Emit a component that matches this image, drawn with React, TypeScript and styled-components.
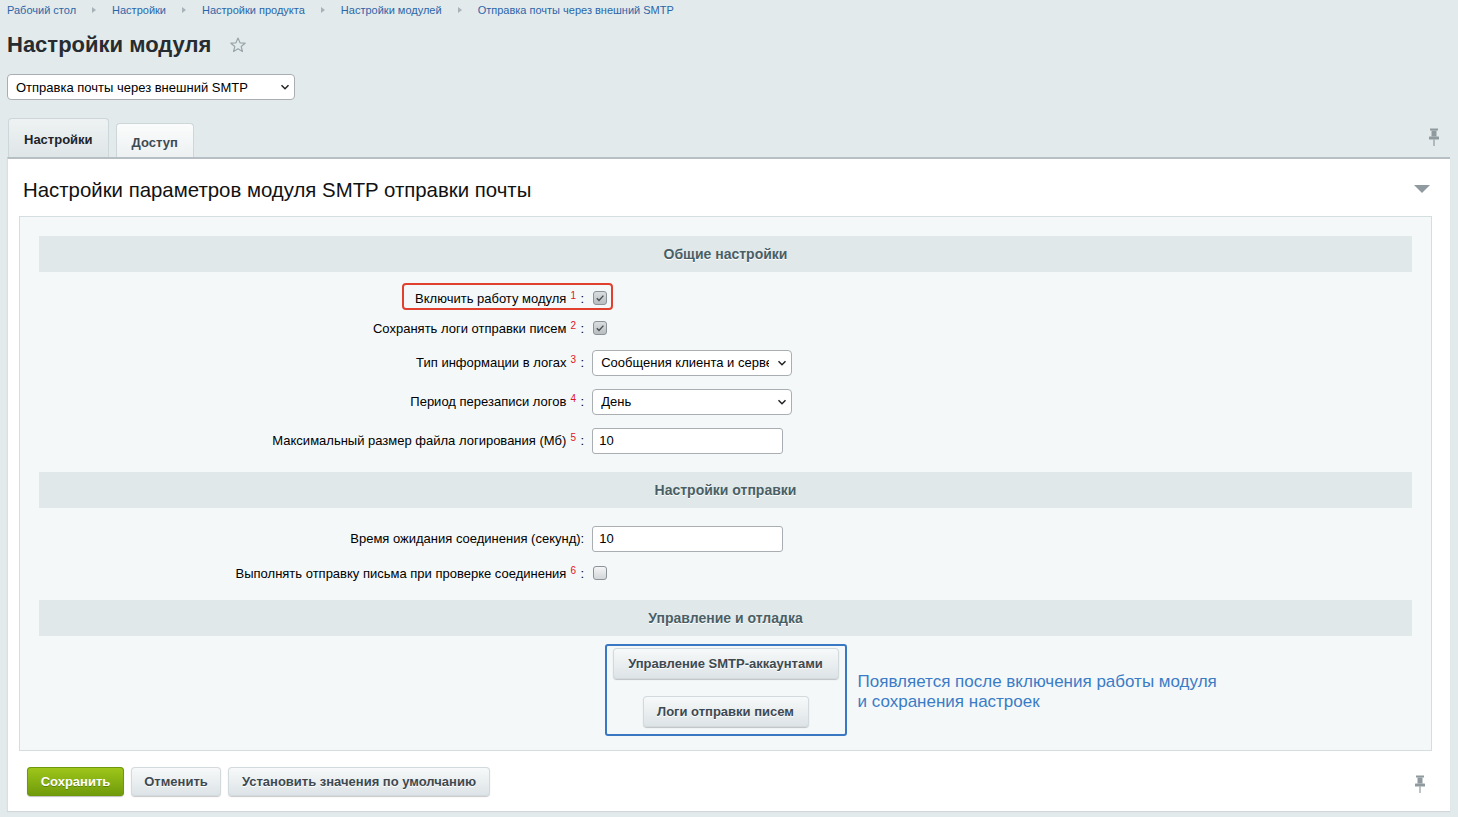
import React from "react";
import styled, { createGlobalStyle } from "styled-components";

const GlobalStyle = createGlobalStyle`
  html, body {
    margin: 0;
    padding: 0;
    background: #e3eaec;
    font-family: "Liberation Sans", Arial, sans-serif;
    color: #000;
  }
  * { box-sizing: border-box; }
`;

// Page shell
const Page = styled.div`
  width: 1458px;
  height: 817px;
  overflow: hidden;
  padding: 3px 8px 0 7px;
`;

const Breadcrumbs = styled.div`
  display: flex;
  align-items: center;
  height: 14px;
  font-size: 11px;
  line-height: 14px;
`;

const Crumb = styled.a`
  color: #2b66a8;
  text-decoration: none;
`;

const CrumbSep = styled.span`
  width: 0;
  height: 0;
  margin: 0 16px 0 16px;
  border-left: 4px solid #a8b3b8;
  border-top: 3px solid transparent;
  border-bottom: 3px solid transparent;
`;

const TitleRow = styled.div`
  display: flex;
  align-items: center;
  gap: 18px;
  margin-top: 15px;
  height: 26px;
`;

const Title = styled.h1`
  margin: 0;
  font-size: 22px;
  line-height: 26px;
  font-weight: bold;
  color: #262c30;
`;

const SelectWrap = styled.div<{ $w: number }>`
  position: relative;
  width: ${(p) => p.$w}px;
  height: 26px;
`;

const Select = styled.select<{ $pad: number }>`
  appearance: none;
  -webkit-appearance: none;
  width: 100%;
  height: 26px;
  padding: 0 22px 0 ${(p) => p.$pad}px;
  border: 1px solid #a8aeb2;
  border-radius: 4px;
  background: #fff;
  font-family: "Liberation Sans", Arial, sans-serif;
  font-size: 13px;
  color: #000;
  outline: none;
`;

const Chevron = styled.span`
  position: absolute;
  right: 5px;
  top: 8px;
  width: 10px;
  height: 10px;
  pointer-events: none;
  display: flex;
`;

const TopSelectWrap = styled.div`
  margin-top: 16px;
`;

// Tabs
const TabBar = styled.div`
  display: flex;
  align-items: flex-end;
  justify-content: space-between;
  margin-top: 18px;
  padding-left: 1px;
  height: 39px;
`;

const Tabs = styled.div`
  display: flex;
  align-items: flex-end;
  gap: 7px;
`;

const Tab = styled.div<{ $active?: boolean }>`
  height: ${(p) => (p.$active ? 39 : 34)}px;
  padding: 0 15px;
  display: flex;
  align-items: center;
  justify-content: center;
  font-size: 13px;
  font-weight: bold;
  color: ${(p) => (p.$active ? "#1d2327" : "#3e4a52")};
  border: 1px solid #cdd6d9;
  border-bottom: none;
  border-radius: 4px 4px 0 0;
  background: ${(p) =>
    p.$active
      ? "linear-gradient(#eef2f3, #dfe6e8)"
      : "linear-gradient(#fbfcfc, #edf1f2)"};
  padding-top: ${(p) => (p.$active ? 3 : 4)}px;
`;

const PinSlot = styled.div<{ $mr: number; $mb: number }>`
  display: flex;
  margin-right: ${(p) => p.$mr}px;
  margin-bottom: ${(p) => p.$mb}px;
`;

// Panel
const Panel = styled.div`
  background: #fff;
  border-top: 2px solid #b6c0c4;
  border-left: 1px solid #d8e0e3;
  box-shadow: 0 1px 1px rgba(0, 0, 0, 0.08);
  height: 654px;
  display: flex;
  flex-direction: column;
`;

const PanelHead = styled.div`
  display: flex;
  align-items: center;
  justify-content: space-between;
  padding: 19px 20px 0 15px;
  height: 43px;
`;

const PanelTitle = styled.h2`
  margin: 0;
  font-size: 20.4px;
  line-height: 24px;
  font-weight: normal;
  color: #111;
`;

const Collapse = styled.span`
  width: 0;
  height: 0;
  border-top: 8px solid #8f9ba0;
  border-left: 8px solid transparent;
  border-right: 8px solid transparent;
  margin-top: -2px;
`;

const InnerBox = styled.div`
  margin: 14px 18px 0 11px;
  background: #f4f8f9;
  border: 1px solid #d4dee1;
  padding: 19px 19px 14px 19px;
`;

const SectionHead = styled.div`
  height: 36px;
  display: flex;
  align-items: center;
  justify-content: center;
  background: #e0e8ea;
  font-size: 14px;
  font-weight: bold;
  color: #4a5f65;
  text-shadow: 0 1px #fff;
`;

const Rows = styled.div`
  padding: 11px 0 12px;
`;

const Row = styled.div<{ $h: number }>`
  display: grid;
  grid-template-columns: 40% 60%;
  align-items: center;
  height: ${(p) => p.$h}px;
`;

const Label = styled.div`
  text-align: right;
  padding-right: 4px;
  font-size: 13px;
  line-height: 15px;
  color: #000;
`;

const LabelText = styled.span<{ $mark?: boolean }>`
  position: relative;
  display: inline-block;
  &::before {
    content: "";
    display: ${(p) => (p.$mark ? "block" : "none")};
    position: absolute;
    left: -13px;
    right: -29px;
    top: -8px;
    bottom: -4px;
    border: 2px solid #e2402f;
    border-radius: 4px;
  }
`;

const Sup = styled.sup`
  color: #e0151b;
  font-size: 10px;
  line-height: 10px;
  vertical-align: top;
  position: relative;
  top: 0;
  margin-left: 4px;
  margin-right: 1px;
`;

const Control = styled.div`
  padding-left: 4px;
  display: flex;
  align-items: center;
`;

const Check = styled.span<{ $checked?: boolean }>`
  width: 14px;
  height: 14px;
  margin-left: 1px;
  border: 1px solid #8b9397;
  border-radius: 3px;
  background: ${(p) =>
    p.$checked
      ? "linear-gradient(#d9dddf, #b8bec1)"
      : "linear-gradient(#f3f4f5, #d3d7d9)"};
  display: flex;
  align-items: center;
  justify-content: center;
`;

const TextInput = styled.input`
  width: 191px;
  height: 26px;
  padding: 0 6px;
  border: 1px solid #a8aeb2;
  border-radius: 3px;
  background: #fff;
  font-family: "Liberation Sans", Arial, sans-serif;
  font-size: 13px;
  color: #000;
  outline: none;
`;

const ActionsArea = styled.div`
  display: flex;
  justify-content: center;
  padding-top: 8px;
`;

const BlueBox = styled.div`
  position: relative;
  width: 242px;
  height: 92px;
  border: 2px solid #3a78c3;
  border-radius: 3px;
  display: flex;
  flex-direction: column;
  align-items: center;
  padding-top: 2px;
  gap: 17px;
`;

const Note = styled.div`
  position: absolute;
  left: calc(100% + 13px);
  top: 26px;
  white-space: nowrap;
  font-size: 17px;
  line-height: 20px;
  color: #3a7cc6;
`;

const Button = styled.button<{ $w: number; $h?: number; $primary?: boolean }>`
  width: ${(p) => p.$w}px;
  height: ${(p) => p.$h ?? 31}px;
  border: none;
  border-radius: 4px;
  font-family: "Liberation Sans", Arial, sans-serif;
  font-size: 13px;
  font-weight: bold;
  padding: 0;
  cursor: pointer;
  color: ${(p) => (p.$primary ? "#fff" : "#3d4950")};
  text-shadow: ${(p) =>
    p.$primary ? "0 1px rgba(0,0,0,0.25)" : "0 1px #fff"};
  background: ${(p) =>
    p.$primary
      ? "linear-gradient(#9fc71a, #6e9a0a)"
      : "linear-gradient(#f8fafa, #dce3e6)"};
  box-shadow: ${(p) =>
    p.$primary
      ? "0 0 0 1px #6f970c inset, 0 1px 1px rgba(0,0,0,0.25)"
      : "0 0 0 1px #d2dadd inset, 0 1px 1px rgba(0,0,0,0.22)"};
`;

const Footer = styled.div`
  display: flex;
  align-items: center;
  justify-content: space-between;
  padding: 16px 24px 0 19px;
`;

const FooterButtons = styled.div`
  display: flex;
  gap: 7px;
`;

const ChevronIcon = () => (
  <svg width="10" height="10" viewBox="0 0 10 10">
    <path d="M1.5 3.2 L5 6.7 L8.5 3.2" fill="none" stroke="#222" strokeWidth="1.5" />
  </svg>
);

const StarIcon = () => (
  <svg width="18" height="18" viewBox="0 0 24 24">
    <path
      d="M12 2.8 L14.7 9.1 L21.5 9.6 L16.3 14 L17.9 20.7 L12 17.1 L6.1 20.7 L7.7 14 L2.5 9.6 L9.3 9.1 Z"
      fill="none"
      stroke="#9aa5aa"
      strokeWidth="1.6"
      strokeLinejoin="round"
    />
  </svg>
);

const PinIcon = () => (
  <svg width="12" height="18" viewBox="0 0 12 18">
    <rect x="2" y="0.5" width="8" height="2" fill="#8f9a9f" />
    <rect x="3.5" y="2.5" width="5" height="6" fill="#8f9a9f" />
    <rect x="1" y="8.5" width="10" height="3" rx="0.5" fill="#8f9a9f" />
    <rect x="5.4" y="11.5" width="1.2" height="6.5" fill="#8f9a9f" />
  </svg>
);

const CheckMark = () => (
  <svg width="10" height="10" viewBox="0 0 10 10">
    <path d="M1.8 5.2 L4 7.4 L8.4 2.6" fill="none" stroke="#4a4f52" strokeWidth="1.4" />
  </svg>
);

const App: React.FC = () => {
  return (
    <>
      <GlobalStyle />
      <Page>
        <Breadcrumbs>
          <Crumb>Рабочий стол</Crumb>
          <CrumbSep />
          <Crumb>Настройки</Crumb>
          <CrumbSep />
          <Crumb>Настройки продукта</Crumb>
          <CrumbSep />
          <Crumb>Настройки модулей</Crumb>
          <CrumbSep />
          <Crumb>Отправка почты через внешний SMTP</Crumb>
        </Breadcrumbs>

        <TitleRow>
          <Title>Настройки модуля</Title>
          <StarIcon />
        </TitleRow>

        <TopSelectWrap>
          <SelectWrap $w={288}>
            <Select $pad={8} defaultValue="smtp">
              <option value="smtp">Отправка почты через внешний SMTP</option>
            </Select>
            <Chevron>
              <ChevronIcon />
            </Chevron>
          </SelectWrap>
        </TopSelectWrap>

        <TabBar>
          <Tabs>
            <Tab $active>Настройки</Tab>
            <Tab>Доступ</Tab>
          </Tabs>
          <PinSlot $mr={10} $mb={11}>
            <PinIcon />
          </PinSlot>
        </TabBar>

        <Panel>
          <PanelHead>
            <PanelTitle>Настройки параметров модуля SMTP отправки почты</PanelTitle>
            <Collapse />
          </PanelHead>

          <InnerBox>
            <SectionHead>Общие настройки</SectionHead>
            <Rows>
              <Row $h={30}>
                <Label>
                  <LabelText $mark>
                    Включить работу модуля<Sup>1</Sup> :
                  </LabelText>
                </Label>
                <Control>
                  <Check $checked>
                    <CheckMark />
                  </Check>
                </Control>
              </Row>
              <Row $h={30}>
                <Label>
                  <LabelText>
                    Сохранять логи отправки писем<Sup>2</Sup> :
                  </LabelText>
                </Label>
                <Control>
                  <Check $checked>
                    <CheckMark />
                  </Check>
                </Control>
              </Row>
              <Row $h={39}>
                <Label>
                  <LabelText>
                    Тип информации в логах<Sup>3</Sup> :
                  </LabelText>
                </Label>
                <Control>
                  <SelectWrap $w={200}>
                    <Select $pad={8} defaultValue="all">
                      <option value="all">Сообщения клиента и сервера</option>
                    </Select>
                    <Chevron>
                      <ChevronIcon />
                    </Chevron>
                  </SelectWrap>
                </Control>
              </Row>
              <Row $h={39}>
                <Label>
                  <LabelText>
                    Период перезаписи логов<Sup>4</Sup> :
                  </LabelText>
                </Label>
                <Control>
                  <SelectWrap $w={200}>
                    <Select $pad={8} defaultValue="day">
                      <option value="day">День</option>
                    </Select>
                    <Chevron>
                      <ChevronIcon />
                    </Chevron>
                  </SelectWrap>
                </Control>
              </Row>
              <Row $h={39}>
                <Label>
                  <LabelText>
                    Максимальный размер файла логирования (Мб)<Sup>5</Sup> :
                  </LabelText>
                </Label>
                <Control>
                  <TextInput defaultValue="10" />
                </Control>
              </Row>
            </Rows>

            <SectionHead>Настройки отправки</SectionHead>
            <Rows>
              <Row $h={39}>
                <Label>
                  <LabelText>Время ожидания соединения (секунд):</LabelText>
                </Label>
                <Control>
                  <TextInput defaultValue="10" />
                </Control>
              </Row>
              <Row $h={30}>
                <Label>
                  <LabelText>
                    Выполнять отправку письма при проверке соединения<Sup>6</Sup> :
                  </LabelText>
                </Label>
                <Control>
                  <Check />
                </Control>
              </Row>
            </Rows>

            <SectionHead>Управление и отладка</SectionHead>
            <ActionsArea>
              <BlueBox>
                <Button $w={226}>Управление SMTP-аккаунтами</Button>
                <Button $w={166}>Логи отправки писем</Button>
                <Note>
                  Появляется после включения работы модуля
                  <br />и сохранения настроек
                </Note>
              </BlueBox>
            </ActionsArea>
          </InnerBox>

          <Footer>
            <FooterButtons>
              <Button $w={97} $h={29} $primary>
                Сохранить
              </Button>
              <Button $w={90} $h={29}>
                Отменить
              </Button>
              <Button $w={262} $h={29}>
                Установить значения по умолчанию
              </Button>
            </FooterButtons>
            <PinSlot $mr={0} $mb={-4}>
              <PinIcon />
            </PinSlot>
          </Footer>
        </Panel>
      </Page>
    </>
  );
};

export default App;
